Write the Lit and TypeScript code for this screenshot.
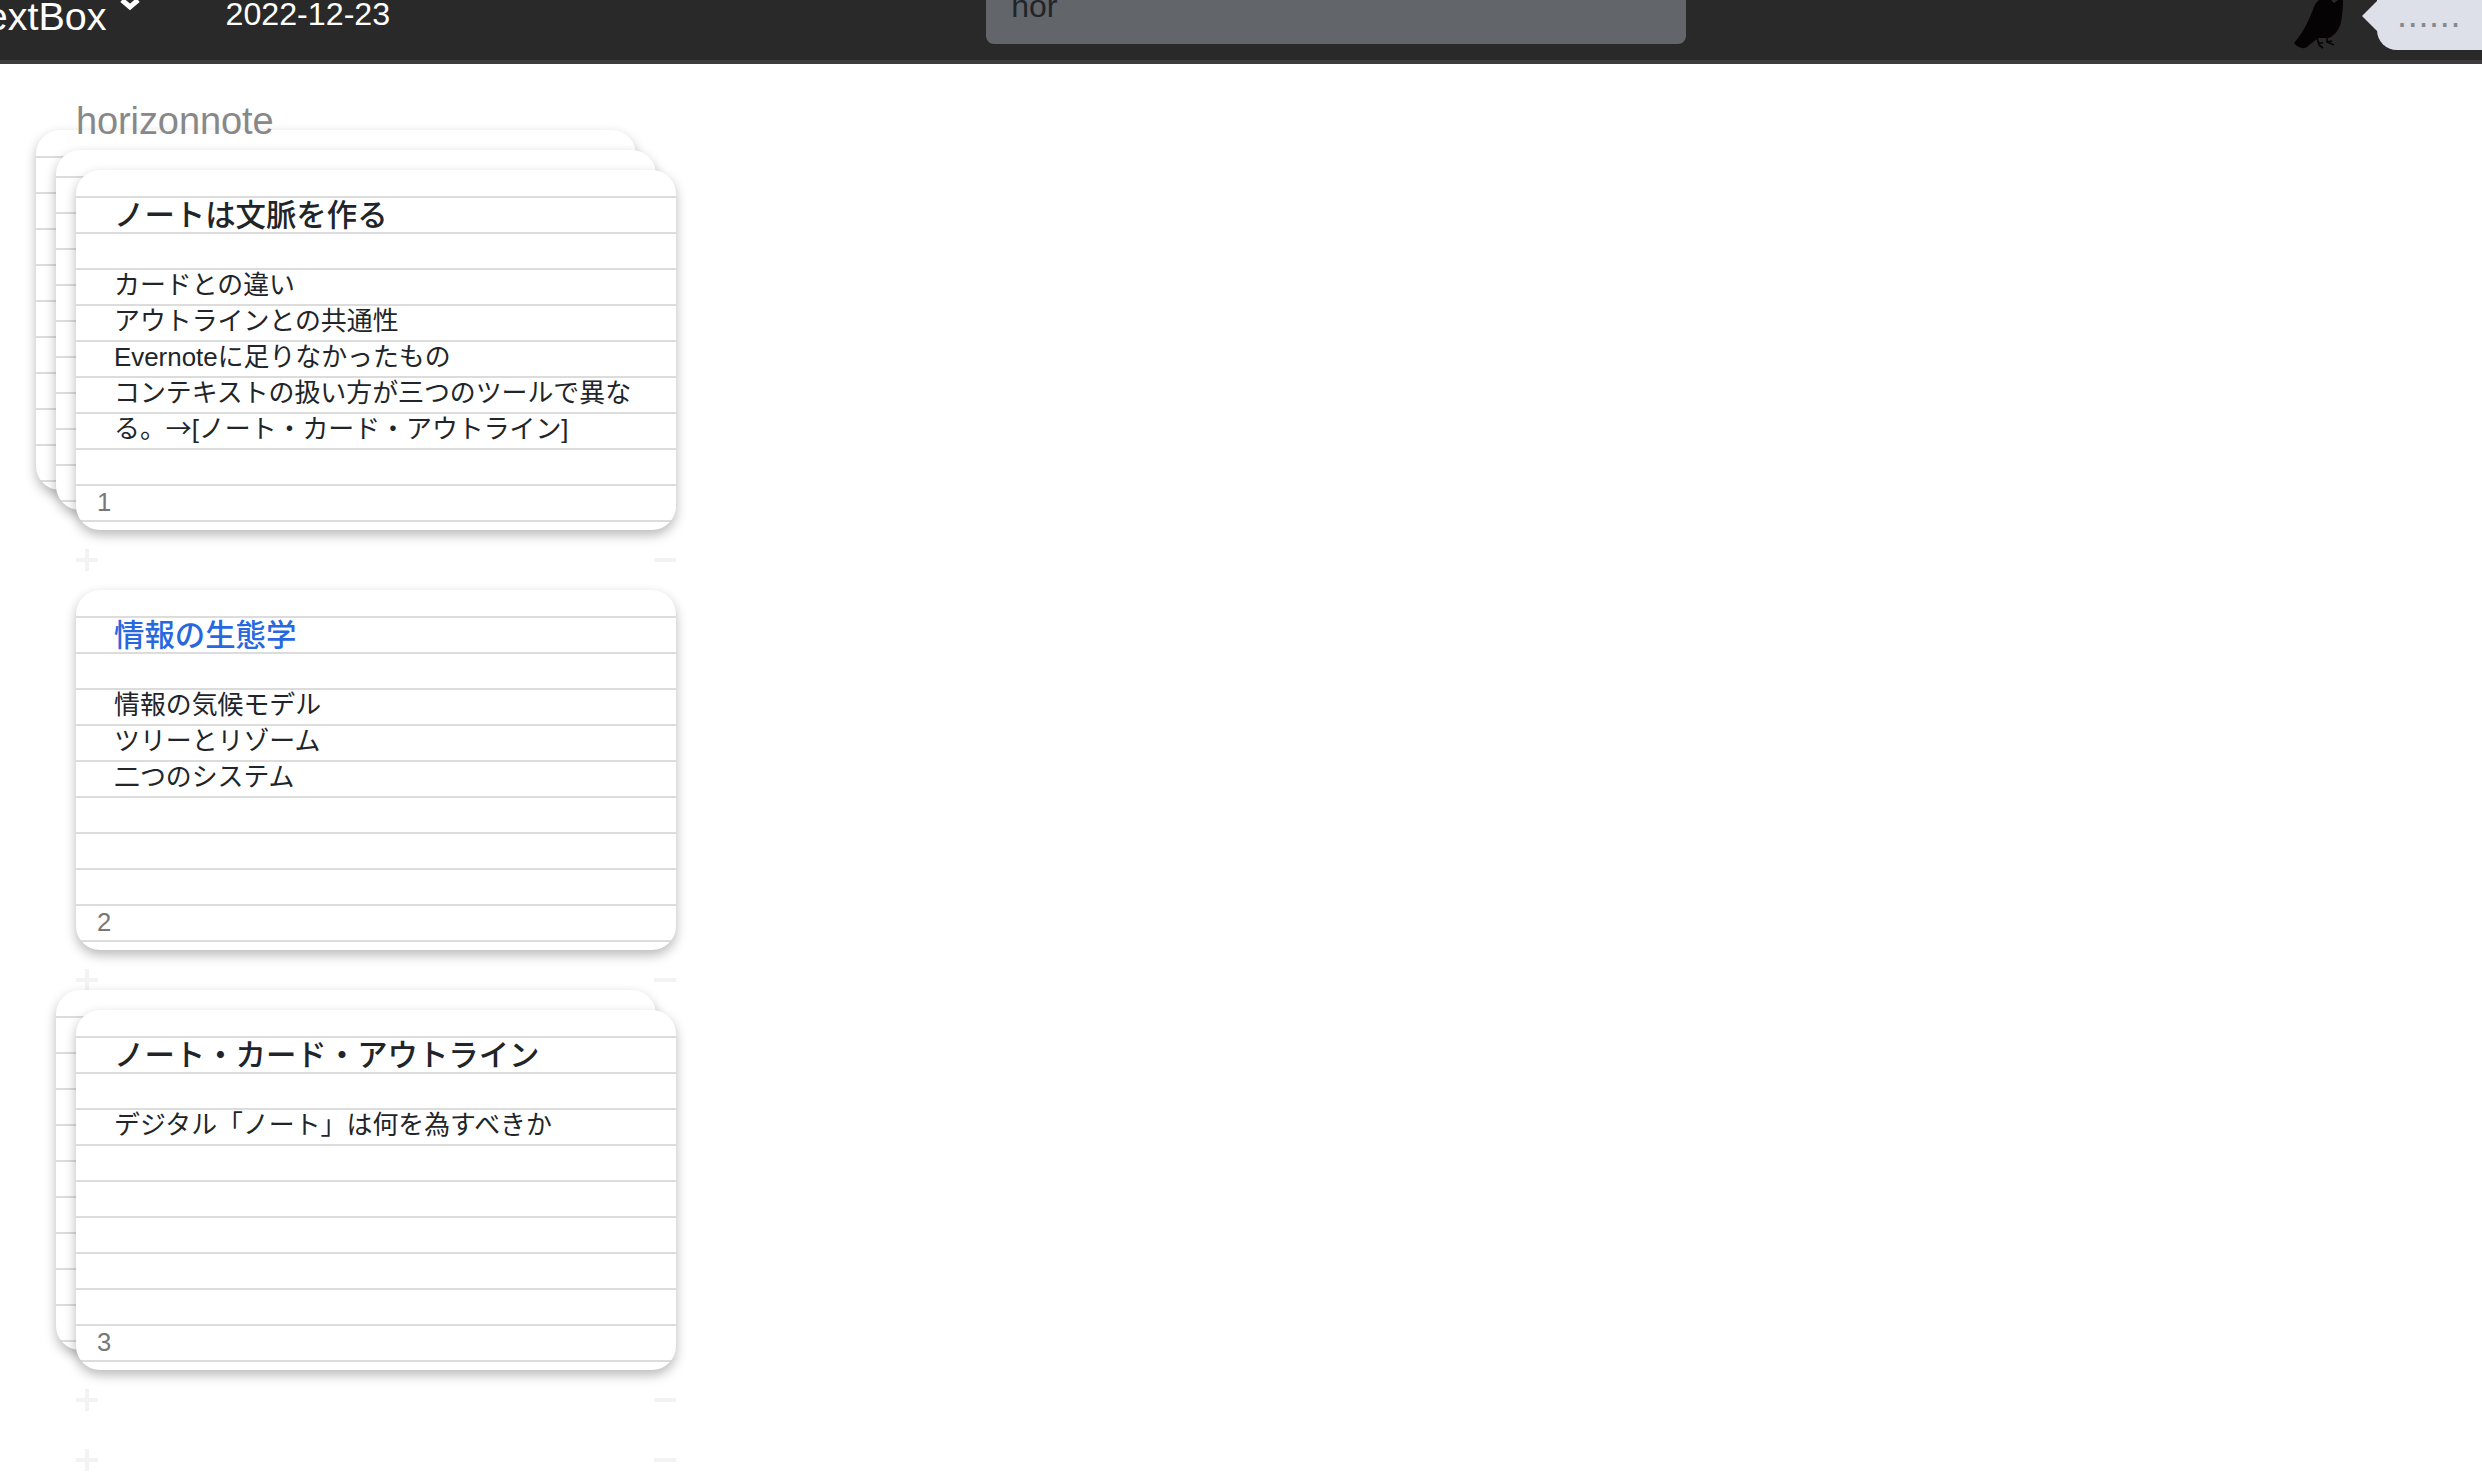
import { LitElement, html, css } from "lit";
import { customElement } from "lit/decorators.js";

const notes = [
  { stack: 2, title: "ノートは文脈を作る", link: false, lines: [["カードとの違い"], ["アウトラインとの共通性"], ["Evernoteに足りなかったもの"], ["コンテキストの扱い方が三つのツールで異なる。", "→", "[ノート・カード・アウトライン]"]], page: 1 },
  { stack: 0, title: "情報の生態学", link: true, lines: [["情報の気候モデル"], ["ツリーとリゾーム"], ["二つのシステム"]], page: 2 },
  { stack: 1, title: "ノート・カード・アウトライン", link: false, lines: [["デジタル「ノート」は何を為すべきか"]], page: 3 },
];

@customElement("app-root")
export class AppRoot extends LitElement {
  static styles = css`
    :host { display: block; height: 1474px; overflow: hidden; background: #fff; font-family: "Liberation Sans", "Noto Sans CJK JP", sans-serif; color: #212529; }
    .bar { height: 60px; border-bottom: 4px solid #3c3c3c; background: #292929; display: flex; align-items: flex-start; overflow: hidden; position: relative; }
    .brand { margin: -12px 0 0 -34px; font-size: 39.5px; line-height: 56px; color: #fff; white-space: nowrap; flex: none; }
    .chev { margin: -4px 0 0 13px; width: 20px; height: 18px; flex: none; }
    .date { margin: -6px 0 0 86px; font-size: 32.2px; line-height: 40px; color: #fff; white-space: nowrap; flex: none; }
    .search { margin: -10px 0 0 596px; width: 700px; height: 54px; box-sizing: border-box; background: #62656a; border-radius: 0 0 8px 8px; padding-left: 25px; font-size: 32px; line-height: 32px; color: #212529; flex: none; }
    .bird { margin: 0 0 0 608px; width: 50px; height: 50px; flex: none; }
    .bubble { position: absolute; left: 2377px; top: -20px; width: 140px; height: 70px; background: #dde0e9; border-radius: 20px; box-sizing: border-box; padding-left: 20px; font-size: 36px; line-height: 70px; letter-spacing: 0.7px; color: #888; }
    .bubble::before { content: ""; position: absolute; left: -15px; top: 21px; width: 0; height: 0; border: 15px solid transparent; border-left: 0; border-right: 15px solid #dde0e9; }
    main { padding: 0 0 0 76px; width: 600px; }
    h1 { position: relative; z-index: 2; margin: 0; padding-top: 48px; font-size: 38px; line-height: 18px; font-weight: 400; color: #888; white-space: nowrap; letter-spacing: -0.1px; }
    .gap { height: 40px; }
    .sheet { position: relative; width: 600px; height: 360px; z-index: 1; }
    .card { position: relative; width: 600px; height: 360px; box-sizing: border-box; border-radius: 24px; overflow: hidden; background-color: #fff; padding: 27px 38px 0; box-shadow: 0 5px 12px rgba(0,0,0,.28);
      background-image: linear-gradient(to bottom, transparent 0, transparent 34px, #dcdcdc 34px, #dcdcdc 36px); background-position: 0 -8px; background-size: 100% 36px; background-repeat: repeat-y; }
    .card.back { position: absolute; }
    .card.b2 { left: -40px; top: -40px; }
    .card.b1 { left: -20px; top: -20px; }
    .card h2 { margin: 0 0 34px; font-size: 30.4px; line-height: 36px; font-weight: 500; white-space: nowrap; }
    .card h2.link { color: #2768e0; }
    .card p { margin: 0; font-size: 25.9px; line-height: 36px; }
    .arrow { font-family: "Noto Sans CJK JP", sans-serif; line-height: 0; }
    .page { position: absolute; left: 21px; top: 314px; font-size: 25.6px; line-height: 36px; color: #777; }
    .tools { height: 60px; display: flex; justify-content: space-between; align-items: center; position: relative; }
    .tools svg { width: 22px; height: 22px; display: block; }
  `;

  private tools() {
    return html`<div class="tools">
      <svg viewBox="0 0 22 22"><path d="M9 0h4v9h9v4h-9v9H9v-9H0V9h9z" fill="#f3f3f3"/></svg>
      <svg viewBox="0 0 22 22"><rect y="9" width="22" height="4" fill="#f3f3f3"/></svg>
    </div>`;
  }

  render() {
    return html`
      <header class="bar">
        <div class="brand">TextBox</div>
        <svg class="chev" viewBox="0 0 20 18"><path d="M2 4l8 7 8-7" fill="none" stroke="#fff" stroke-width="5"/></svg>
        <div class="date">2022-12-23</div>
        <div class="search">nor</div>
        <svg class="bird" viewBox="0 0 50 50"><path d="M0 43 C9 33 14 22 18 12 C20 6 22 2 25 0 L37 0 L40 3 L44 0 L49 0 C49 8 48 16 47 22 C45 30 41 35 35 38 L24 38 L14 46 C11 50 4 48 0 43Z" fill="#050303"/><path d="M23 37l2 8 4 3M33 38l0 4 7 3M24 43l5 0M33 42l5 -1" fill="none" stroke="#050303" stroke-width="1.6"/></svg>
        <div class="bubble">......</div>
      </header>
      <main>
        <h1>horizonnote</h1>
        <div class="gap"></div>
        ${notes.map((n) => html`
          <div class="sheet">
            ${n.stack >= 2 ? html`<div class="card back b2"></div>` : ""}
            ${n.stack >= 1 ? html`<div class="card back b1"></div>` : ""}
            <div class="card">
              <h2 class=${n.link ? "link" : ""}>${n.title}</h2>
              ${n.lines.map((l) => html`<p>${l.map((t) => t === "→" ? html`<span class="arrow">${t}</span>` : t)}</p>`)}
              <div class="page">${n.page}</div>
            </div>
          </div>
          ${this.tools()}
        `)}
        ${this.tools()}
      </main>
    `;
  }
}
